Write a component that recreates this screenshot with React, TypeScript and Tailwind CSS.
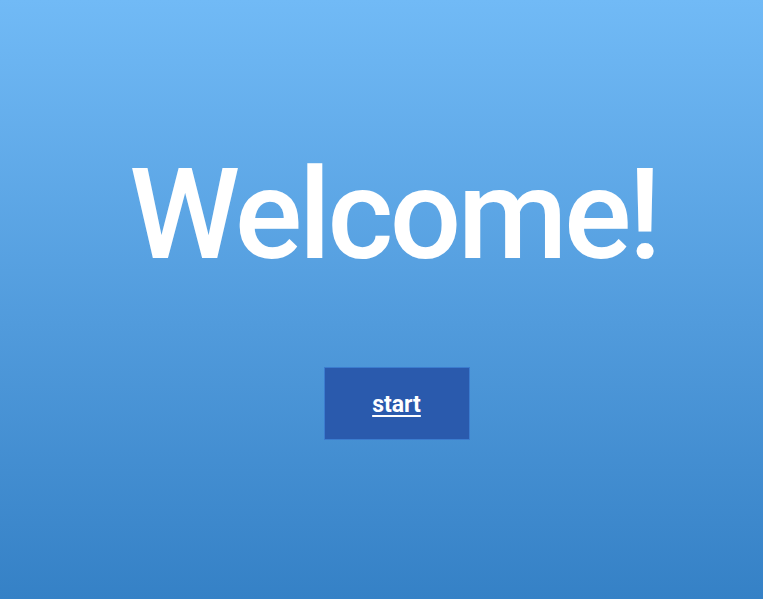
export default function App() {
  return (
    <div className="min-h-[599px] w-full bg-gradient-to-b from-[#71baf6] to-[#3581c6] font-['Roboto',sans-serif] flex flex-col items-center pl-[24px] pt-[140px]">
      <h1 className="text-[126px] font-medium leading-[150px] tracking-[-3.5px] text-white">Welcome!</h1>
      <button className="mt-[77px] ml-[6px] w-[146px] h-[73px] pt-[3px] bg-[#2a5aad] border border-[#3b7ccf] text-white text-[23px] font-bold underline underline-offset-[3px]">
        start
      </button>
    </div>
  );
}
